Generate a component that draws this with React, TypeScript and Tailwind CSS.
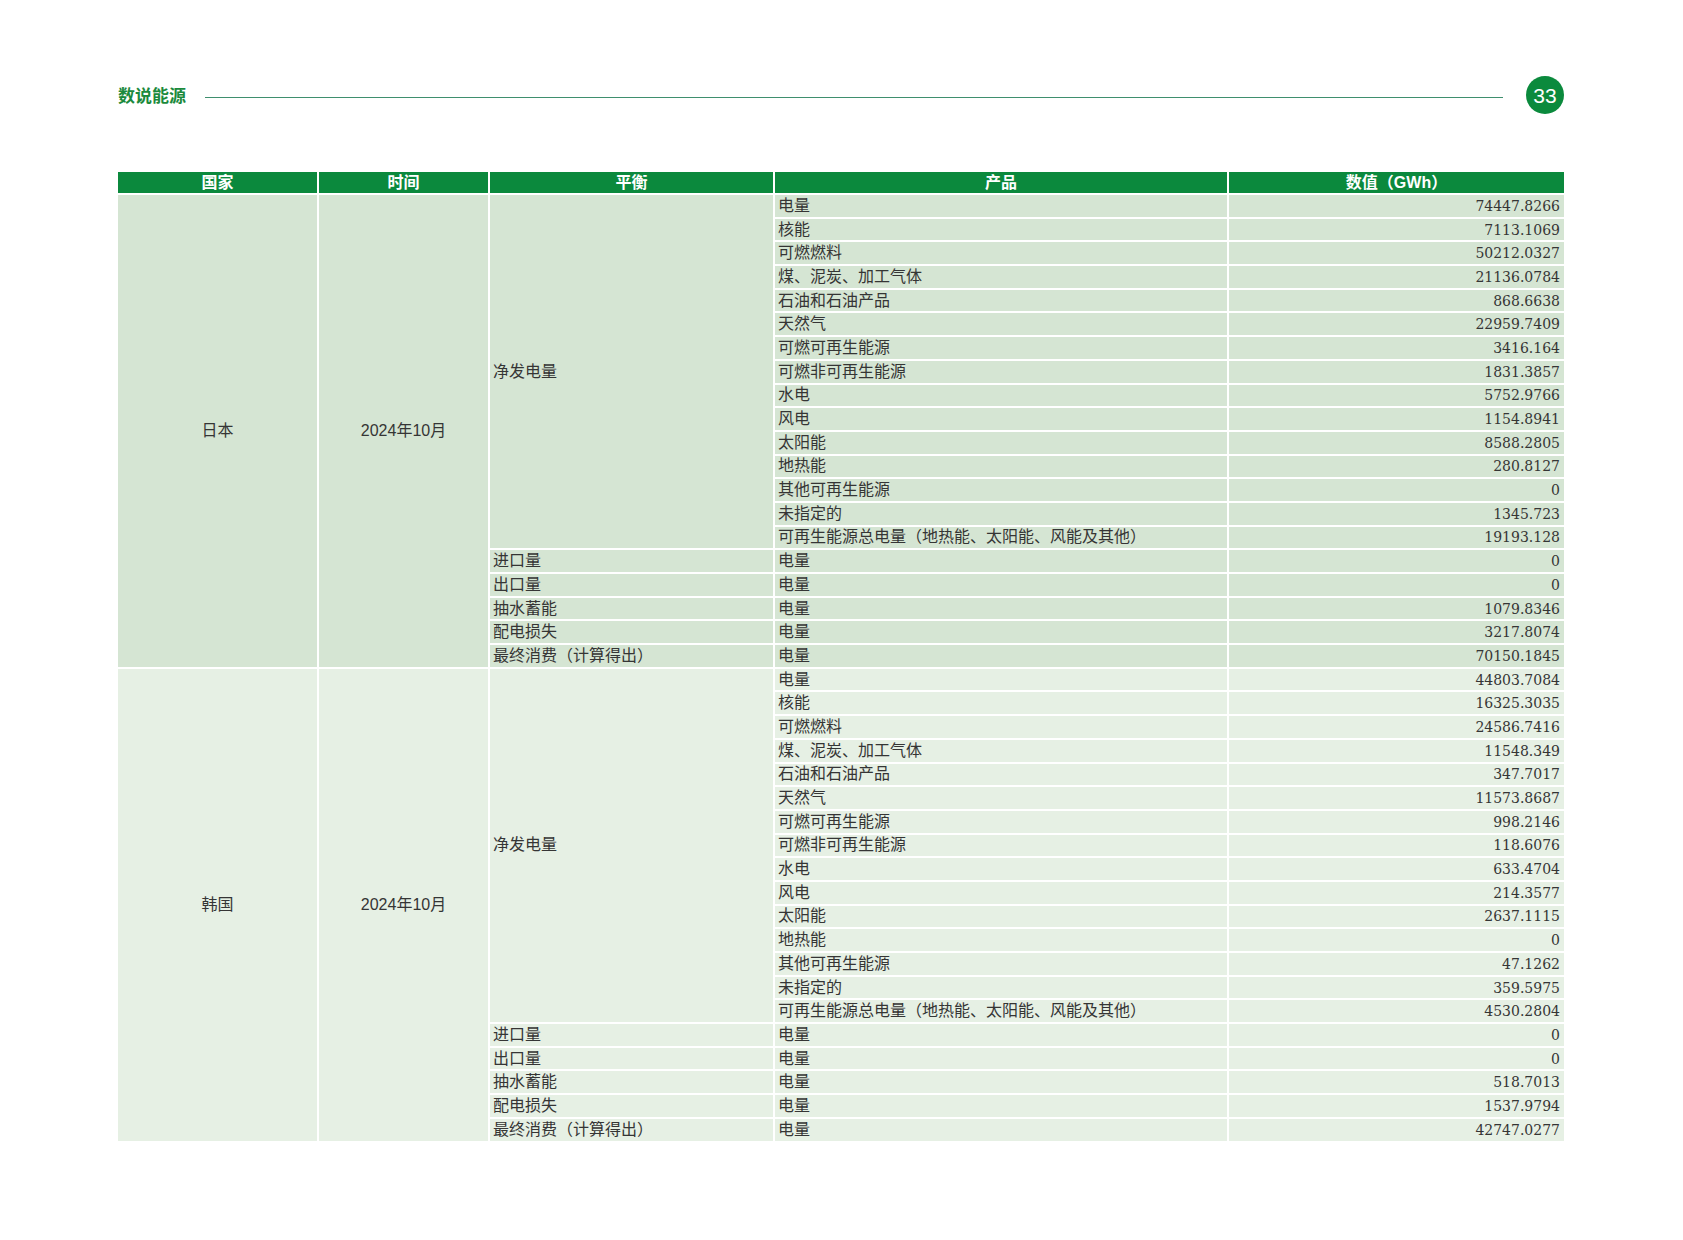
import React from 'react'

type Row = { balance?: string; span?: number; product: string; value: string }

const netRows: [string, string, string][] = [
    ['电量', '74447.8266', '44803.7084'],
    ['核能', '7113.1069', '16325.3035'],
    ['可燃燃料', '50212.0327', '24586.7416'],
    ['煤、泥炭、加工气体', '21136.0784', '11548.349'],
    ['石油和石油产品', '868.6638', '347.7017'],
    ['天然气', '22959.7409', '11573.8687'],
    ['可燃可再生能源', '3416.164', '998.2146'],
    ['可燃非可再生能源', '1831.3857', '118.6076'],
    ['水电', '5752.9766', '633.4704'],
    ['风电', '1154.8941', '214.3577'],
    ['太阳能', '8588.2805', '2637.1115'],
    ['地热能', '280.8127', '0'],
    ['其他可再生能源', '0', '47.1262'],
    ['未指定的', '1345.723', '359.5975'],
    ['可再生能源总电量（地热能、太阳能、风能及其他）', '19193.128', '4530.2804'],
]

const otherRows: [string, string, string][] = [
    ['进口量', '0', '0'],
    ['出口量', '0', '0'],
    ['抽水蓄能', '1079.8346', '518.7013'],
    ['配电损失', '3217.8074', '1537.9794'],
    ['最终消费（计算得出）', '70150.1845', '42747.0277'],
]

const buildRows = (idx: 1 | 2): Row[] => [
    ...netRows.map((r, i) => ({
        balance: i === 0 ? '净发电量' : undefined,
        span: i === 0 ? 15 : undefined,
        product: r[0],
        value: r[idx],
    })),
    ...otherRows.map((r) => ({ balance: r[0], span: 1, product: '电量', value: r[idx] })),
]

const sections = [
    { country: '日本', bg: 'bg-[#d5e5d3]', rows: buildRows(1) },
    { country: '韩国', bg: 'bg-[#e6f0e4]', rows: buildRows(2) },
]

const headers = ['国家', '时间', '平衡', '产品', '数值（GWh）']

export default function App() {
    return (
        <div className="w-[1683px] h-[1240px] bg-white text-[#353535] font-['Liberation_Sans','Noto_Sans_CJK_SC',sans-serif]">
            <div className="pl-[118px] pr-[119px] pt-[76px]">
                {/* Page header */}
                <div className="flex items-center h-[38px]">
                    <span className="text-[17px] font-bold text-[#1b8a3c] leading-none mt-[3px]">数说能源</span>
                    <div className="flex-1 h-px bg-[#3f8f6e] ml-[19px] mr-[23px] mt-[4px]" />
                    <div className="w-[38px] h-[38px] rounded-full bg-[#0b8a3d] flex items-center justify-center text-white text-[21px] leading-none">
                        33
                    </div>
                </div>

                {/* Table */}
                <div className="mt-[58px] grid grid-cols-[199px_169px_283px_452px_1fr] grid-rows-[21px] auto-rows-[21.7px] gap-[2px] bg-white">
                    {headers.map((h) => (
                        <div key={h} className="bg-[#0b893d] text-white font-bold text-[16px] flex items-center justify-center leading-none">
                            {h}
                        </div>
                    ))}

                    {sections.map((s) => (
                        <React.Fragment key={s.country}>
                            <div className={`${s.bg} row-span-20 flex items-center justify-center text-[16px]`}>{s.country}</div>
                            <div className={`${s.bg} row-span-20 flex items-center justify-center text-[16px]`}>2024年10月</div>
                            {s.rows.map((r, i) => (
                                <React.Fragment key={i}>
                                    {r.balance && (
                                        <div className={`${s.bg} ${r.span === 15 ? 'row-span-15' : ''} flex items-center pl-[3px] text-[16px] leading-none`}>
                                            {r.balance}
                                        </div>
                                    )}
                                    <div className={`${s.bg} flex items-center pl-[3px] text-[16px] leading-none whitespace-nowrap`}>{r.product}</div>
                                    <div className={`${s.bg} flex items-center justify-end pr-[4px] text-[14px] leading-none font-['DejaVu_Serif',serif]`}>
                                        {r.value}
                                    </div>
                                </React.Fragment>
                            ))}
                        </React.Fragment>
                    ))}
                </div>
            </div>
        </div>
    )
}
